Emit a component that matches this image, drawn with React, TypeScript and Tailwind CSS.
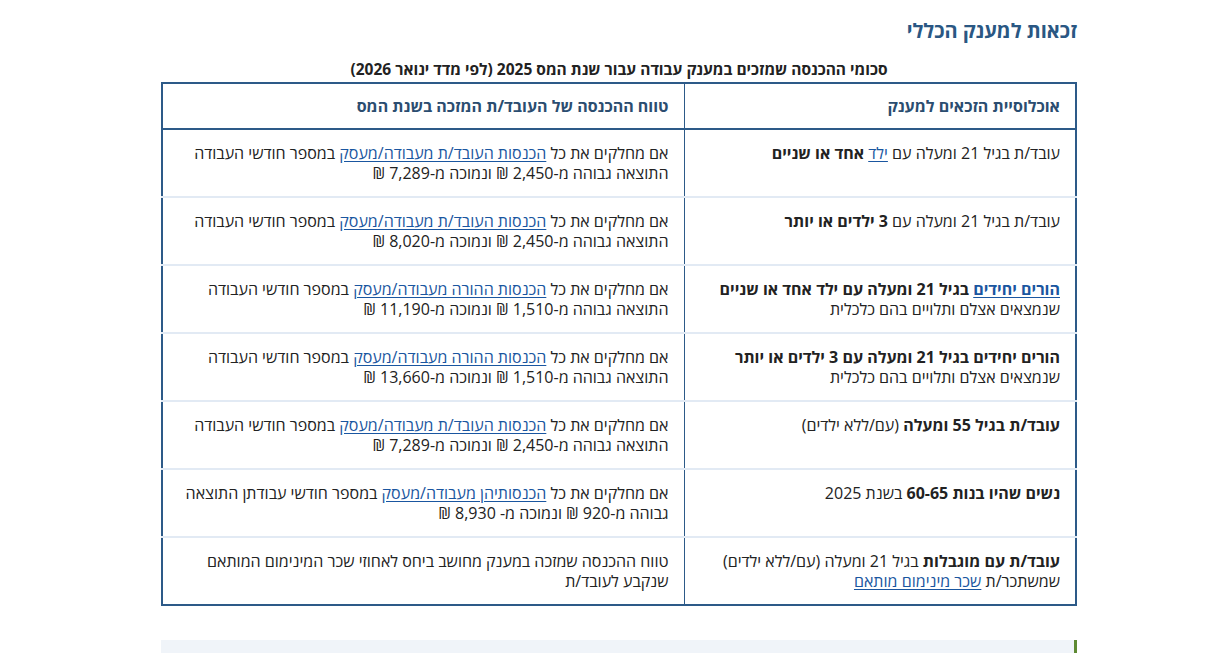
import type { ReactNode } from "react";

function L({ children }: { children: ReactNode }) {
  return <a className="text-[#1a56a0] underline underline-offset-2">{children}</a>;
}

const rows: { who: ReactNode; range: ReactNode }[] = [
  {
    who: (
      <>
        עובד/ת בגיל 21 ומעלה עם <L>ילד</L> <b>אחד או שניים</b>
      </>
    ),
    range: (
      <>
        אם מחלקים את כל <L>הכנסות העובד/ת מעבודה/מעסק</L> במספר חודשי העבודה התוצאה גבוהה מ-2,450 ₪ ונמוכה מ-7,289 ₪
      </>
    ),
  },
  {
    who: (
      <>
        עובד/ת בגיל 21 ומעלה עם <b>3 ילדים או יותר</b>
      </>
    ),
    range: (
      <>
        אם מחלקים את כל <L>הכנסות העובד/ת מעבודה/מעסק</L> במספר חודשי העבודה התוצאה גבוהה מ-2,450 ₪ ונמוכה מ-8,020 ₪
      </>
    ),
  },
  {
    who: (
      <>
        <b>
          <L>הורים יחידים</L> בגיל 21 ומעלה עם ילד אחד או שניים
        </b>
        <br />
        שנמצאים אצלם ותלויים בהם כלכלית
      </>
    ),
    range: (
      <>
        אם מחלקים את כל <L>הכנסות ההורה מעבודה/מעסק</L> במספר חודשי העבודה התוצאה גבוהה מ-1,510 ₪ ונמוכה מ-11,190 ₪
      </>
    ),
  },
  {
    who: (
      <>
        <b>הורים יחידים בגיל 21 ומעלה עם 3 ילדים או יותר</b>
        <br />
        שנמצאים אצלם ותלויים בהם כלכלית
      </>
    ),
    range: (
      <>
        אם מחלקים את כל <L>הכנסות ההורה מעבודה/מעסק</L> במספר חודשי העבודה התוצאה גבוהה מ-1,510 ₪ ונמוכה מ-13,660 ₪
      </>
    ),
  },
  {
    who: (
      <>
        <b>עובד/ת בגיל 55 ומעלה</b> (עם/ללא ילדים)
      </>
    ),
    range: (
      <>
        אם מחלקים את כל <L>הכנסות העובד/ת מעבודה/מעסק</L> במספר חודשי העבודה התוצאה גבוהה מ-2,450 ₪ ונמוכה מ-7,289 ₪
      </>
    ),
  },
  {
    who: (
      <>
        <b>נשים שהיו בנות 60-65</b> בשנת 2025
      </>
    ),
    range: (
      <>
        אם מחלקים את כל <L>הכנסותיהן מעבודה/מעסק</L> במספר חודשי עבודתן התוצאה גבוהה מ-920 ₪ ונמוכה מ- 8,930 ₪
      </>
    ),
  },
  {
    who: (
      <>
        <b>עובד/ת עם מוגבלות</b> בגיל 21 ומעלה (עם/ללא ילדים)
        <br />
        שמשתכר/ת <L>שכר מינימום מותאם</L>
      </>
    ),
    range: <>טווח ההכנסה שמזכה במענק מחושב ביחס לאחוזי שכר המינימום המותאם שנקבע לעובד/ת</>,
  },
];

export default function App() {
  return (
    <div
      dir="rtl"
      className="h-[653px] bg-white text-[#222] overflow-hidden"
      style={{ fontFamily: '"Open Sans", "Noto Sans", "Liberation Sans", sans-serif' }}
    >
      <div className="mr-[129px] w-[916px]">
        <h2 className="pt-[16px] text-[20px] font-bold leading-[30px] text-[#2a5783]">זכאות למענק הכללי</h2>
        <p className="mt-[12px] text-center text-[15.5px] font-bold leading-[22px]">
          סכומי ההכנסה שמזכים במענק עבודה עבור שנת המס 2025 (לפי מדד ינואר 2026)
        </p>
        <table className="mt-[2px] w-full border-collapse border-2 border-[#2d5a88] text-[16px] leading-[20px]">
          <thead>
            <tr className="border-b-2 border-[#2d5a88]">
              <th className="w-[392px] border-l border-[#2d5a88] px-[15px] py-[12px] text-right font-bold text-[#2b4d70]">
                אוכלוסיית הזכאים למענק
              </th>
              <th className="px-[15px] py-[12px] text-right font-bold text-[#2b4d70]">
                טווח ההכנסה של העובד/ת המזכה בשנת המס
              </th>
            </tr>
          </thead>
          <tbody>
            {rows.map((r, i) => (
              <tr key={i} className="border-b-2 border-[#e2eaf4] last:border-[#2d5a88]">
                <td className="h-[67px] border-l border-[#2d5a88] px-[15px] pt-[13px] pb-[13px] align-top last:h-[68px]">
                  {r.who}
                </td>
                <td className="px-[15px] pt-[13px] pb-[13px] align-top">{r.range}</td>
              </tr>
            ))}
          </tbody>
        </table>
        <div className="mt-[34px] h-[40px] border-r-[3px] border-[#5e8a33] bg-[#f0f4f9]" />
      </div>
    </div>
  );
}
